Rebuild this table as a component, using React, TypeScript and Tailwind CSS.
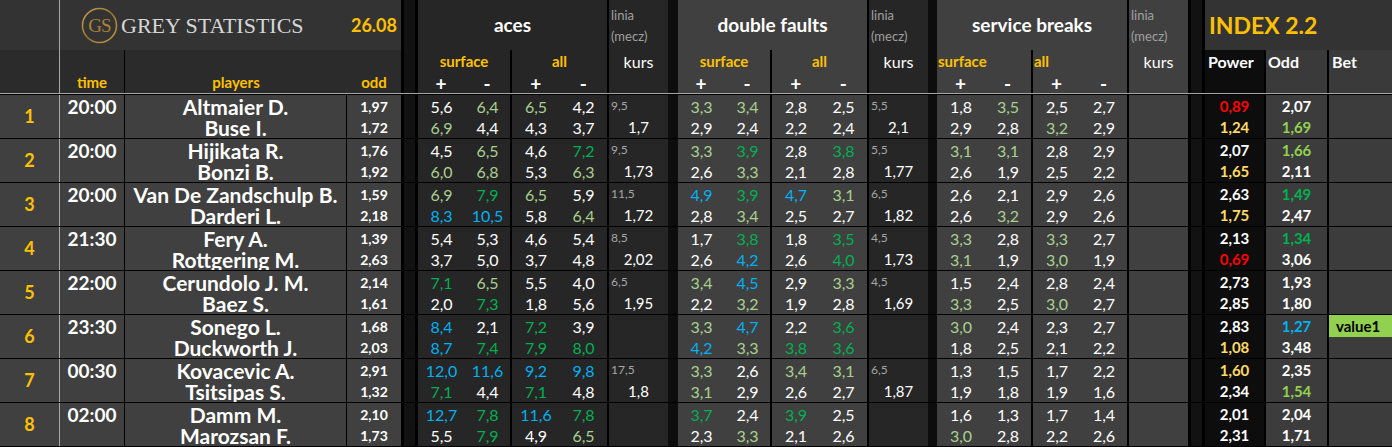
import React from 'react';

const COLS =
  'grid grid-cols-[60px_65px_222px_54px_17px_47px_47px_48px_49px_59px_10px_47px_47px_48px_49px_59px_9px_48px_48px_48px_48px_59px_17px_59px_65px_63px] grid-rows-[43px]';

const COLOR: Record<string, string> = {
  w: 'text-white',
  l: 'text-[#a9d08e]',
  g: 'text-[#00b050]',
  b: 'text-[#00b0f0]',
  r: 'text-[#ff0000]',
  y: 'text-[#ffd966]',
  L: 'text-[#92d050]',
};

type M = {
  n: number;
  t: string;
  p: [string, string];
  o: [string, string];
  a: string;
  al: [string, string];
  d: string;
  dl: [string, string];
  s: string;
  pw: [string, string];
  od: [string, string];
  bet?: string;
};

const DATA: M[] = [
  { n: 1, t: '20:00', p: ['Altmaier D.', 'Buse I.'], o: ['1,97', '1,72'], a: '5,6w 6,4l 6,5l 4,2w|6,9l 4,4w 4,3w 3,7w', al: ['9,5', '1,7'], d: '3,3l 3,4l 2,8w 2,5w|2,9w 2,4w 2,2w 2,4w', dl: ['5,5', '2,1'], s: '1,8w 3,5l 2,5w 2,7w|2,9w 2,8w 3,2l 2,9w', pw: ['0,89r', '1,24y'], od: ['2,07w', '1,69L'] },
  { n: 2, t: '20:00', p: ['Hijikata R.', 'Bonzi B.'], o: ['1,76', '1,92'], a: '4,5w 6,5l 4,6w 7,2g|6,0l 6,8l 5,3w 6,3l', al: ['9,5', '1,73'], d: '3,3l 3,9g 2,8w 3,8g|2,6w 3,3l 2,1w 2,8w', dl: ['5,5', '1,77'], s: '3,1l 3,1l 2,8w 2,9w|2,6w 1,9w 2,5w 2,2w', pw: ['2,07w', '1,65y'], od: ['1,66L', '2,11w'] },
  { n: 3, t: '20:00', p: ['Van De Zandschulp B.', 'Darderi L.'], o: ['1,59', '2,18'], a: '6,9l 7,9g 6,5l 5,9w|8,3b 10,5b 5,8w 6,4l', al: ['11,5', '1,72'], d: '4,9b 3,9g 4,7b 3,1l|2,8w 3,4l 2,5w 2,7w', dl: ['6,5', '1,82'], s: '2,6w 2,1w 2,9w 2,6w|2,6w 3,2l 2,9w 2,6w', pw: ['2,63w', '1,75y'], od: ['1,49g', '2,47w'] },
  { n: 4, t: '21:30', p: ['Fery A.', 'Rottgering M.'], o: ['1,39', '2,63'], a: '5,4w 5,3w 4,6w 5,4w|3,7w 5,0w 3,7w 4,8w', al: ['8,5', '2,02'], d: '1,7w 3,8g 1,8w 3,5g|2,6w 4,2b 2,6w 4,0g', dl: ['4,5', '1,73'], s: '3,3l 2,8w 3,3l 2,7w|3,1l 1,9w 3,0l 1,9w', pw: ['2,13w', '0,69r'], od: ['1,34g', '3,06w'] },
  { n: 5, t: '22:00', p: ['Cerundolo J. M.', 'Baez S.'], o: ['2,14', '1,61'], a: '7,1g 6,5l 5,5w 4,0w|2,0w 7,3g 1,8w 5,6w', al: ['6,5', '1,95'], d: '3,4l 4,5b 2,9w 3,3l|2,2w 3,2l 1,9w 2,8w', dl: ['4,5', '1,69'], s: '1,5w 2,4w 2,8w 2,4w|3,3l 2,5w 3,0l 2,7w', pw: ['2,73w', '2,85w'], od: ['1,93w', '1,80w'] },
  { n: 6, t: '23:30', p: ['Sonego L.', 'Duckworth J.'], o: ['1,68', '2,03'], a: '8,4b 2,1w 7,2g 3,9w|8,7b 7,4g 7,9g 8,0g', al: ['', ''], d: '3,3l 4,7b 2,2w 3,6g|4,2b 3,3l 3,8g 3,6g', dl: ['', ''], s: '3,0l 2,4w 2,3w 2,7w|1,8w 2,5w 2,1w 2,2w', pw: ['2,83w', '1,08y'], od: ['1,27b', '3,48w'], bet: 'value1' },
  { n: 7, t: '00:30', p: ['Kovacevic A.', 'Tsitsipas S.'], o: ['2,91', '1,32'], a: '12,0b 11,6b 9,2b 9,8b|7,1g 4,4w 7,1g 4,8w', al: ['17,5', '1,8'], d: '3,3l 2,6w 3,4l 3,1l|3,1l 2,9w 2,6w 2,7w', dl: ['6,5', '1,87'], s: '1,3w 1,5w 1,7w 2,2w|1,9w 1,8w 1,9w 1,6w', pw: ['1,60y', '2,34w'], od: ['2,35w', '1,54L'] },
  { n: 8, t: '02:00', p: ['Damm M.', 'Marozsan F.'], o: ['2,10', '1,73'], a: '12,7b 7,8g 11,6b 7,8g|5,5w 7,9g 4,9w 6,5l', al: ['', ''], d: '3,7g 2,4w 3,9g 2,5w|2,3w 3,3l 2,1w 2,6w', dl: ['', ''], s: '1,6w 1,3w 1,7w 1,4w|3,0l 2,8w 2,2w 2,6w', pw: ['2,01w', '2,31w'], od: ['2,04w', '1,71w'] },
];

function Val({ s }: { s: string }) {
  const c = s.slice(-1);
  const v = s.slice(0, -1);
  return <div className={`h-[21px] leading-[21px] ${COLOR[c]}`}>{v}</div>;
}

function Stat({ s, bg }: { s: string; bg: string }) {
  const lines = s.split('|').map((l) => l.split(' '));
  return (
    <>
      {[0, 1, 2, 3].map((i) => (
        <div
          key={i}
          className={`${bg} overflow-hidden pt-px text-center text-[16px] ${i === 1 || i === 3 ? 'border-r-2 border-black' : ''}`}
        >
          {lines.map((ln, j) => (
            <Val key={j} s={ln[i]} />
          ))}
        </div>
      ))}
    </>
  );
}

function Linia({ v, bg }: { v: [string, string]; bg: string }) {
  return (
    <div className={`${bg} overflow-hidden pt-px`}>
      <div className="h-[21px] leading-[19px] pl-[2px] text-[12px] text-[#a6a6a6]">{v[0]}</div>
      <div className="h-[21px] leading-[21px] text-center text-[15px] text-white">{v[1]}</div>
    </div>
  );
}

function Strip() {
  return <div className="bg-[#121212] border-x-[3px] border-black" />;
}

function Row({ m }: { m: M }) {
  return (
    <div className={COLS}>
      <div className="bg-[#404040] border-r border-[#a6a6a6] flex items-center justify-center text-[#ffc000] font-bold text-[18px]">
        {m.n}
      </div>
      <div className="bg-[#404040] border-r border-black pt-px text-center text-white font-bold text-[19px] leading-[21px]">
        {m.t}
      </div>
      <div className="bg-[#404040] border-r border-black pt-px text-center text-white font-bold text-[21px] overflow-hidden">
        <div className="h-[21px] leading-[21px] whitespace-nowrap">{m.p[0]}</div>
        <div className="h-[21px] leading-[21px] whitespace-nowrap">{m.p[1]}</div>
      </div>
      <div className="bg-[#404040] pt-px text-center text-white font-bold text-[14px]">
        <div className="h-[21px] leading-[21px]">{m.o[0]}</div>
        <div className="h-[21px] leading-[21px]">{m.o[1]}</div>
      </div>
      <Strip />
      <Stat s={m.a} bg="bg-[#262626]" />
      <Linia v={m.al} bg="bg-[#262626]" />
      <div className="bg-[#0d0d0d]" />
      <Stat s={m.d} bg="bg-[#404040]" />
      <Linia v={m.dl} bg="bg-[#262626]" />
      <div className="bg-[#0d0d0d]" />
      <Stat s={m.s} bg="bg-[#404040]" />
      <Linia v={['', '']} bg="bg-[#404040]" />
      <Strip />
      <div className="bg-[#0d0d0d] pt-px text-center font-bold text-[15px]">
        <Val s={m.pw[0]} />
        <Val s={m.pw[1]} />
      </div>
      <div className="bg-[#3c3c3c] border-l-2 border-r-2 border-black pt-px text-center font-bold text-[15px]">
        <Val s={m.od[0]} />
        <Val s={m.od[1]} />
      </div>
      <div className="bg-[#3c3c3c]">
        {m.bet && (
          <div className="h-[22px] leading-[22px] bg-[#92d050] text-black font-bold text-[15px] pl-[7px]">{m.bet}</div>
        )}
      </div>
    </div>
  );
}

function SubHead({ label, bg, left = false }: { label: string; bg: string; left?: boolean }) {
  return (
    <div className={`${bg} flex flex-col border-r-2 border-black`}>
      <div className={`h-[22px] leading-[22px] text-[15px] font-bold text-[#ffc000] ${left ? 'pl-[1px]' : 'text-center'}`}>
        {label}
      </div>
      <div className="h-[21px] leading-[22px] pt-[1px] grid grid-cols-2 text-center text-white font-bold text-[19px]">
        <span>+</span>
        <span>-</span>
      </div>
    </div>
  );
}

function Section({ title, w1, w2, bg, left = false }: { title: string; w1: string; w2: string; bg: string; left?: boolean }) {
  return (
    <div className="flex flex-col">
      <div className={`${bg} h-[50px] flex items-center justify-center text-white font-bold text-[19px] border-r-2 border-black`}>
        {title}
      </div>
      <div className="flex h-[43px]">
        <div className={w1 + ' grid'}>
          <SubHead label="surface" bg={bg} left={left} />
        </div>
        <div className={w2 + ' grid'}>
          <SubHead label="all" bg={bg} left={left} />
        </div>
      </div>
    </div>
  );
}

function LiniaHead({ bg }: { bg: string }) {
  return (
    <div className={`w-[59px] ${bg} flex flex-col`}>
      <div className="h-[50px] pt-[5px] pl-[2px] text-[13px] leading-[21px] text-[#a0a0a0]">
        <div>linia</div>
        <div>(mecz)</div>
      </div>
      <div className="h-[43px] text-center text-white text-[16px] leading-[22px] pt-[1px]">kurs</div>
    </div>
  );
}

function StripHead({ w }: { w: string }) {
  return <div className={`${w} bg-[#121212] border-x-[3px] border-black`} />;
}

function Logo() {
  return (
    <svg width="37" height="37" viewBox="0 0 37 37">
      <defs>
        <linearGradient id="gold" x1="0" y1="0" x2="1" y2="1">
          <stop offset="0" stopColor="#c9a24a" />
          <stop offset="0.5" stopColor="#9a7530" />
          <stop offset="1" stopColor="#c29a45" />
        </linearGradient>
      </defs>
      <circle cx="18.5" cy="18.5" r="17" fill="none" stroke="url(#gold)" strokeWidth="1.6" />
      <text
        x="18.5"
        y="25"
        textAnchor="middle"
        fontFamily="Liberation Serif, serif"
        fontSize="19"
        fill="#a9843a"
        letterSpacing="-1"
      >
        GS
      </text>
    </svg>
  );
}

export default function App() {
  return (
    <div className="w-[1392px] h-[447px] overflow-hidden bg-black [font-family:Lato,'Liberation_Sans',sans-serif]">
      {/* header */}
      <div className="flex h-[94px] border-b border-[#a6a6a6]">
        <div className="w-[60px] flex flex-col border-r border-[#a6a6a6]">
          <div className="h-[50px] bg-[#333333]" />
          <div className="h-[43px] bg-[#2b2b2b]" />
        </div>
        <div className="w-[341px] flex flex-col">
          <div className="h-[50px] bg-[#333333] flex items-center pl-[21px] pr-[4px]">
            <Logo />
            <span className="ml-[3px] text-[22px] leading-none text-[#d6d6d6] [font-family:'Liberation_Serif',serif] pt-[2px]">
              GREY STATISTICS
            </span>
            <span className="ml-auto text-[18px] font-bold text-[#ffc000]">26.08</span>
          </div>
          <div className="h-[43px] flex bg-[#2b2b2b] text-[#ffc000] font-bold text-[15px]">
            <div className="w-[65px] border-r border-black pt-[21px] leading-[22px] text-center">time</div>
            <div className="w-[222px] pt-[21px] leading-[22px] text-center">players</div>
            <div className="w-[54px] pt-[21px] leading-[22px] text-center">odd</div>
          </div>
        </div>
        <StripHead w="w-[17px]" />
        <Section title="aces" w1="w-[94px]" w2="w-[97px]" bg="bg-[#262626]" />
        <LiniaHead bg="bg-[#262626]" />
        <div className="w-[10px] bg-[#0d0d0d]" />
        <Section title="double faults" w1="w-[94px]" w2="w-[97px]" bg="bg-[#404040]" />
        <LiniaHead bg="bg-[#262626]" />
        <div className="w-[9px] bg-[#0d0d0d]" />
        <Section title="service breaks" w1="w-[96px]" w2="w-[96px]" bg="bg-[#404040]" left />
        <LiniaHead bg="bg-[#404040]" />
        <StripHead w="w-[17px]" />
        <div className="w-[187px] flex flex-col">
          <div className="h-[50px] bg-[#333333] flex items-center pl-[4px] text-[#ffc000] font-bold text-[23px]">
            INDEX 2.2
          </div>
          <div className="h-[43px] flex text-white font-bold text-[16px] leading-[22px]">
            <div className="w-[59px] bg-[#0d0d0d] pl-[3px] pt-[1px]">Power</div>
            <div className="w-[65px] bg-[#3a3a3a] border-l-2 border-r-2 border-black pl-[2px] pt-[1px]">Odd</div>
            <div className="w-[63px] bg-[#3a3a3a] pl-[3px] pt-[1px]">Bet</div>
          </div>
        </div>
      </div>
      <div className="flex flex-col gap-px bg-black pt-px">
        {DATA.map((m) => (
          <Row key={m.n} m={m} />
        ))}
      </div>
    </div>
  );
}
